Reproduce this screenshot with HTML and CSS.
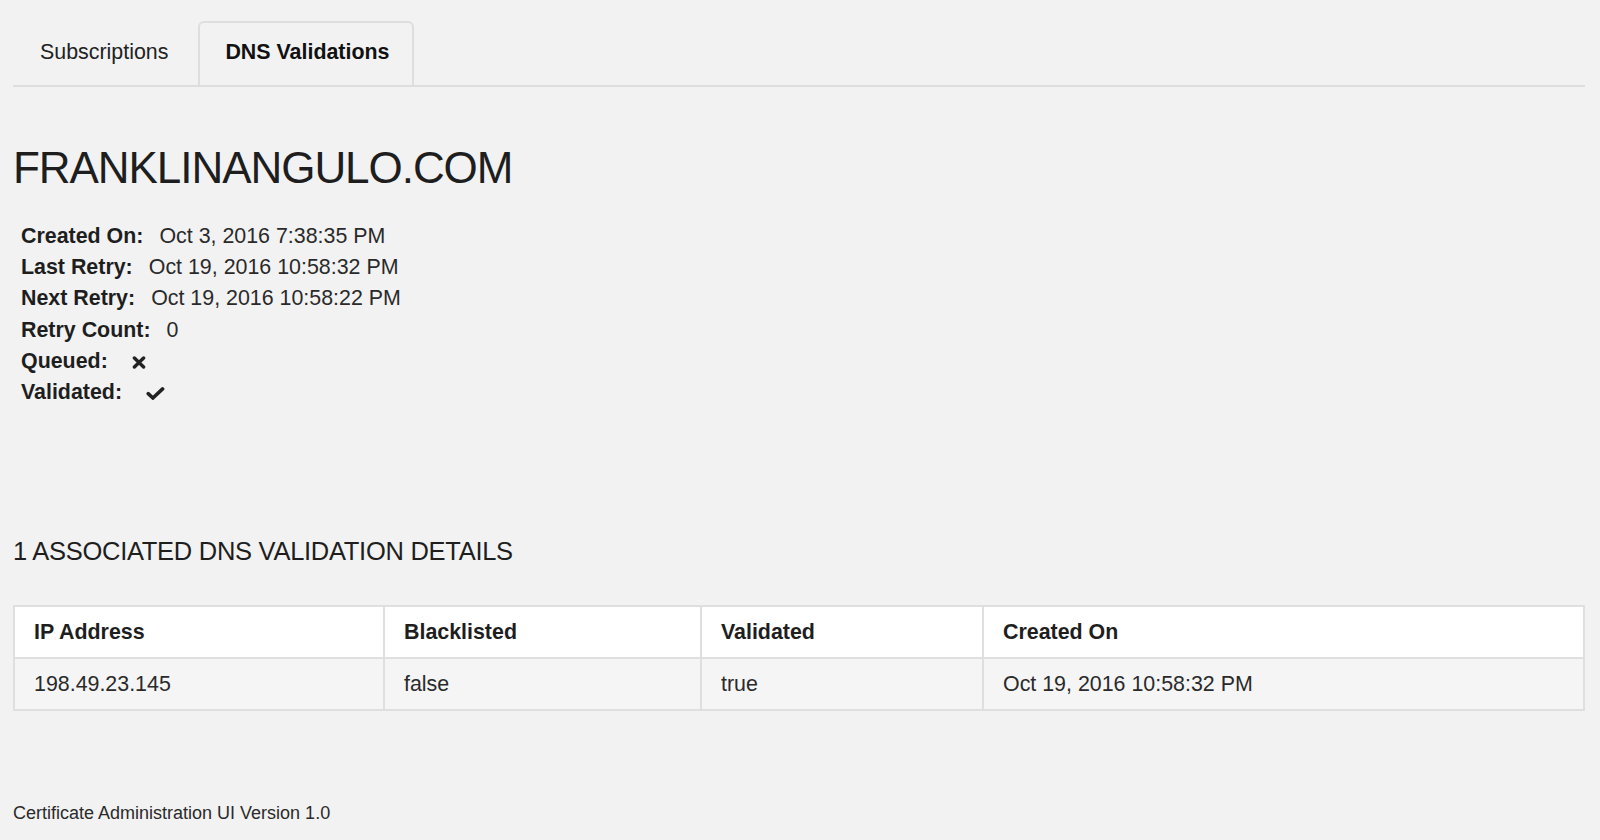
FILE: index.html
```html
<!DOCTYPE html>
<html lang="en">
<head>
<meta charset="utf-8">
<title>Certificate Administration UI</title>
<link rel="stylesheet" href="styles.css">
</head>
<body>
<div class="page">
  <ul class="tabs">
    <li class="tab">Subscriptions</li>
    <li class="tab tab-active">DNS Validations</li>
  </ul>

  <h2 class="domain">FRANKLINANGULO.COM</h2>

  <div class="details">
    <div class="detail-row"><span class="label">Created On:</span><span class="value">Oct 3, 2016 7:38:35 PM</span></div>
    <div class="detail-row"><span class="label">Last Retry:</span><span class="value">Oct 19, 2016 10:58:32 PM</span></div>
    <div class="detail-row"><span class="label">Next Retry:</span><span class="value">Oct 19, 2016 10:58:22 PM</span></div>
    <div class="detail-row"><span class="label">Retry Count:</span><span class="value">0</span></div>
    <div class="detail-row"><span class="label">Queued:</span><svg class="icon icon-times" width="14" height="13" viewBox="0 0 14 13"><path d="M2.4 2 L11.6 11 M11.6 2 L2.4 11" stroke="#222" stroke-width="3.4" stroke-linecap="round" fill="none"/></svg></div>
    <div class="detail-row"><span class="label">Validated:</span><svg class="icon icon-check" width="19" height="13" viewBox="0 0 19 13"><polyline points="2.2,6.6 6.9,11 16.6,1.9" stroke="#222" stroke-width="3.5" stroke-linecap="round" stroke-linejoin="miter" fill="none"/></svg></div>
  </div>

  <h4 class="section-title">1 ASSOCIATED DNS VALIDATION DETAILS</h4>

  <table class="grid">
    <colgroup>
      <col class="c1"><col class="c2"><col class="c3"><col class="c4">
    </colgroup>
    <thead>
      <tr><th>IP Address</th><th>Blacklisted</th><th>Validated</th><th>Created On</th></tr>
    </thead>
    <tbody>
      <tr><td>198.49.23.145</td><td>false</td><td>true</td><td>Oct 19, 2016 10:58:32 PM</td></tr>
    </tbody>
  </table>

  <footer class="footer">Certificate Administration UI Version 1.0</footer>
</div>
</body>
</html>
```
FILE: styles.css
```css
html, body {
  margin: 0;
  padding: 0;
  background: #f2f2f2;
}

body {
  font-family: "Liberation Sans", Arial, Helvetica, sans-serif;
  color: #222;
}

.page {
  padding: 21px 15px 0 13px;
}

.tabs {
  display: flex;
  list-style: none;
  margin: 0;
  padding: 0;
  border-bottom: 2px solid #dedede;
}

.tab {
  font-size: 21.4px;
  line-height: 30.6px;
  padding: 14px 25px 17px 25px;
  border: 2px solid transparent;
  border-bottom: none;
  border-radius: 6px 6px 0 0;
  margin-right: 3px;
  color: #222;
}

.tab-active {
  font-weight: bold;
  border-color: #dedede;
  color: #111;
  padding-right: 23px;
}

.domain {
  margin: 57px 0 0 0;
  font-size: 44px;
  line-height: 1.1;
  font-weight: normal;
  letter-spacing: -1.05px;
  color: #1e1e1e;
}

.details {
  margin-top: 29px;
  padding-left: 8px;
  font-size: 21.4px;
  line-height: 31.2px;
}

.detail-row {
  white-space: nowrap;
}

.label {
  font-weight: bold;
  color: #1e1e1e;
  margin-right: 16px;
}

.value {
  color: #2a2a2a;
}

.icon {
  display: inline-block;
  vertical-align: -1px;
}

.icon-times {
  margin-left: 8px;
}

.icon-check {
  margin-left: 8px;
}

.section-title {
  margin: 129px 0 0 0;
  font-size: 25.5px;
  line-height: 1.1;
  font-weight: normal;
  letter-spacing: -0.28px;
  color: #1e1e1e;
}

.grid {
  margin-top: 40px;
  width: 100%;
  table-layout: fixed;
  border-collapse: collapse;
  border: 2px solid #dfdfdf;
  font-size: 21.4px;
  line-height: 30px;
}

.grid .c1 { width: 370px; }
.grid .c2 { width: 317px; }
.grid .c3 { width: 282px; }

.grid th,
.grid td {
  border: 2px solid #dfdfdf;
  padding: 10px 19px;
  text-align: left;
  white-space: nowrap;
}

.grid th {
  background: #ffffff;
  font-weight: bold;
  color: #1e1e1e;
}

.grid td {
  background: #f5f5f5;
  color: #2a2a2a;
}

.footer {
  margin-top: 90px;
  font-size: 18px;
  line-height: 25px;
  color: #2a2a2a;
}
```
